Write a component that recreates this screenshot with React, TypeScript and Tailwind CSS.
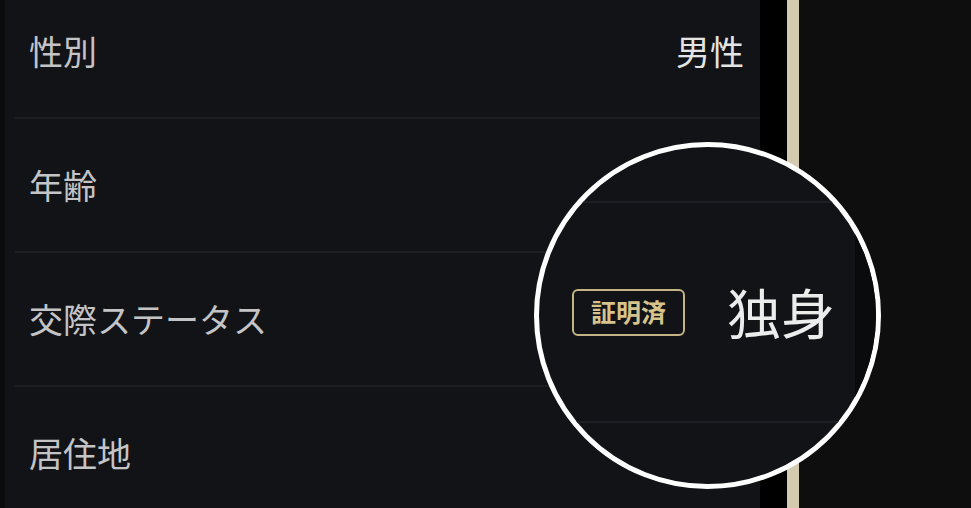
import React from "react";

const font = { fontFamily: '"Noto Sans CJK JP", "Noto Sans", sans-serif' };

type Row = { label: string; value?: string };

const rows: Row[] = [
  { label: "性別", value: "男性" },
  { label: "年齢" },
  { label: "交際ステータス" },
  { label: "居住地" },
];

function VerifiedBadge() {
  return (
    <span className="flex h-[47px] items-center rounded-[6px] border-2 border-[#c4b485] px-[17px] text-[25px] font-bold text-[#d6c48c]">
      証明済
    </span>
  );
}

export default function App() {
  return (
    <div
      className="relative flex h-[508px] w-[971px] overflow-hidden bg-[#0e0e0e]"
      style={font}
    >
      <div className="w-[5px] shrink-0 bg-[#0a0b0d]" />

      {/* profile list */}
      <div className="w-[755px] shrink-0 bg-[#111317]">
        <div className="-mt-[15px] flex flex-col">
          {rows.map((r) => (
            <div
              key={r.label}
              className="ml-[10px] flex h-[134px] items-center justify-between border-b-2 border-[#1b1d21] pl-[14px] pr-[16px]"
            >
              <span className="text-[34px] leading-none text-[#c4c4c6]">
                {r.label}
              </span>
              {r.value && (
                <span className="text-[34px] leading-none text-[#e4e4e4]">
                  {r.value}
                </span>
              )}
            </div>
          ))}
        </div>
      </div>

      <div className="w-[27px] shrink-0 bg-black" />
      <div className="w-[12px] shrink-0 bg-[#d4cab0]" />
      <div className="flex-1 bg-[#0e0e0e]" />

      {/* magnifier */}
      <div className="absolute left-[534px] top-[142px] flex h-[347px] w-[347px] overflow-hidden rounded-full border-[5px] border-white bg-[#111317]">
        <div className="w-[316px] shrink-0">
          <div className="-mt-[164px] flex flex-col">
            <div className="h-[220px] border-b-2 border-[#1d1f24]" />
            <div className="flex h-[220px] items-center justify-end gap-[42px] border-b-2 border-[#1d1f24] pr-[20px]">
              <VerifiedBadge />
              <span className="text-[54px] leading-none text-[#ececec]">
                独身
              </span>
            </div>
            <div className="h-[220px]" />
          </div>
        </div>
        <div className="flex-1 bg-[#0a0b0d]" />
      </div>
    </div>
  );
}
